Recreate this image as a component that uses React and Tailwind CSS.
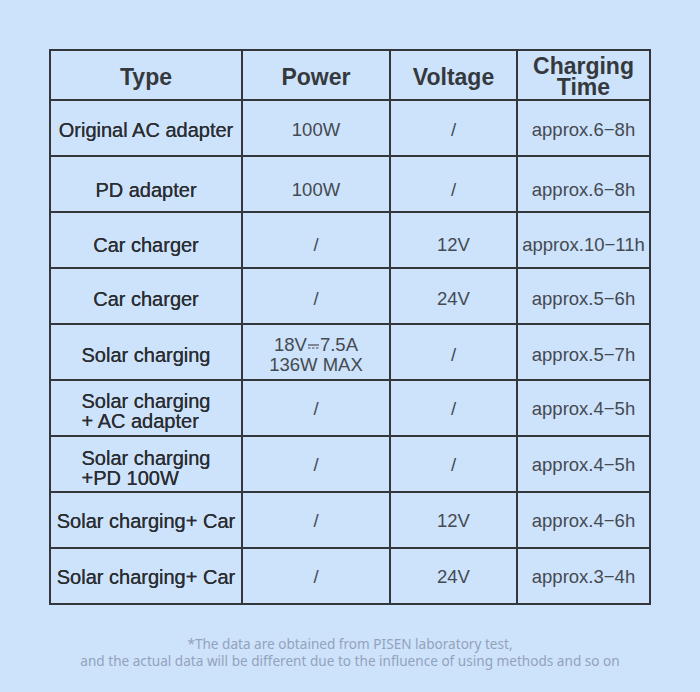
const rows = [
  { type: 'Original AC adapter', power: '100W', volt: '/', time: 'approx.6−8h', shift: 'pt-[4px]' },
  { type: 'PD adapter', power: '100W', volt: '/', time: 'approx.6−8h', shift: 'pt-[11px]' },
  { type: 'Car charger', power: '/', volt: '12V', time: 'approx.10−11h', shift: 'pt-[9px]' },
  { type: 'Car charger', power: '/', volt: '24V', time: 'approx.5−6h', shift: 'pt-[6px]' },
  { type: ['Solar charging'], power: 'dc', volt: '/', time: 'approx.5−7h', shift: 'pt-[6px]' },
  { type: ['Solar charging', '+ AC adapter'], power: '/', volt: '/', time: 'approx.4−5h', shift: 'pt-[2px]', typeShift: 'pt-[6px]' },
  { type: ['Solar charging', '+PD 100W'], power: '/', volt: '/', time: 'approx.4−5h', shift: 'pt-[1px]', typeShift: 'pt-[7px]' },
  { type: 'Solar charging+ Car', power: '/', volt: '12V', time: 'approx.4−6h', shift: 'pt-[2px]' },
  { type: 'Solar charging+ Car', power: '/', volt: '24V', time: 'approx.3−4h', shift: 'pt-[2px]' },
];

const cell = 'flex items-center justify-center border-r-2 border-b-2 border-[#33363a] text-center';

function DcSign() {
  return (
    <svg width="11" height="7" viewBox="0 0 11 7" className="inline-block mx-[1px] align-middle">
      <line x1="0" y1="2" x2="11" y2="2" stroke="#454b52" strokeWidth="1.2" />
      <line x1="0" y1="5" x2="11" y2="5" stroke="#454b52" strokeWidth="1.2" strokeDasharray="2.5 1.5" />
    </svg>
  );
}

function TypeCell({ value }) {
  if (typeof value === 'string') return <span>{value}</span>;
  return (
    <span className="inline-block text-left leading-[20px]">
      {value.map((l, i) => (
        <span key={i} className="block">{l}</span>
      ))}
    </span>
  );
}

export default function App() {
  return (
    <div className="w-[700px] h-[692px] bg-[#cde2fb] pt-[49px] pl-[49px] font-['Liberation_Sans',Arial,sans-serif]">
      <div className="grid grid-cols-[192px_148px_127px_133px] w-[602px] border-l-2 border-t-2 border-[#33363a]">
        <div className={`${cell} h-[50px] text-[23px] font-bold text-[#35393d] pt-[4px]`}>Type</div>
        <div className={`${cell} h-[50px] text-[23px] font-bold text-[#35393d] pt-[4px]`}>Power</div>
        <div className={`${cell} h-[50px] text-[23px] font-bold text-[#35393d] pt-[4px]`}>Voltage</div>
        <div className={`${cell} h-[50px] text-[23px] font-bold text-[#35393d] leading-[21px] pt-[3px]`}>
          <span>Charging<br />Time</span>
        </div>

        {rows.map((r, i) => (
          <div key={i} className="contents">
            <div className={`${cell} ${r.typeShift || r.shift} h-[56px] text-[20px] text-[#2a2d31] [text-shadow:0_0_0.5px_#2a2d31]`}>
              <TypeCell value={r.type} />
            </div>
            <div className={`${cell} ${r.shift} h-[56px] text-[18.5px] text-[#444a51]`}>
              {r.power === 'dc' ? (
                <span className="leading-[20px]">
                  18V<DcSign />7.5A<br />136W MAX
                </span>
              ) : (
                r.power
              )}
            </div>
            <div className={`${cell} ${r.shift} h-[56px] text-[18.5px] text-[#444a51]`}>{r.volt}</div>
            <div className={`${cell} ${r.shift} h-[56px] text-[18.5px] text-[#444a51] whitespace-nowrap`}>{r.time}</div>
          </div>
        ))}
      </div>

      <div className="w-[602px] mt-[30px] text-center text-[13.6px] leading-[17px] text-[#93a3bb] font-['Noto_Sans',sans-serif]">
        <p>*The data are obtained from PISEN laboratory test,</p>
        <p className="whitespace-nowrap">and the actual data will be different due to the influence of using methods and so on</p>
      </div>
    </div>
  );
}
